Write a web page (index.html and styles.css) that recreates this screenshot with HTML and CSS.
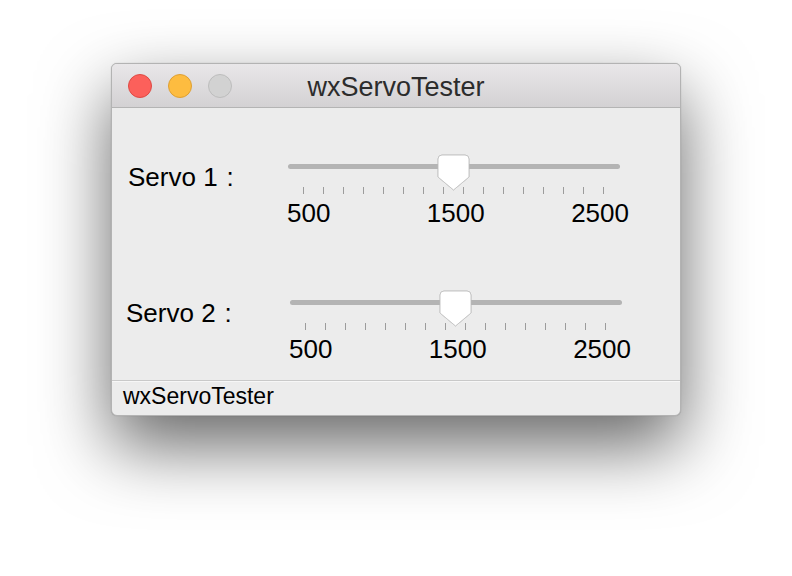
FILE: index.html
```html
<!DOCTYPE html>
<html>
<head>
<meta charset="utf-8">
<link rel="stylesheet" href="styles.css">
</head>
<body>
<div class="window">
  <div class="titlebar">
    <div class="lights">
      <span class="light red"></span>
      <span class="light yellow"></span>
      <span class="light gray"></span>
    </div>
    <div class="title">wxServoTester</div>
  </div>
  <div class="content">
    <div class="row row1">
      <div class="label">Servo 1<span class="colon">:</span></div>
      <div class="slider">
        <div class="track-wrap">
          <div class="track"></div>
          <svg class="thumb" width="33" height="37" viewBox="0 0 33 37"><path d="M5 1 H28 Q32 1 32 5 V23 L16.5 36 L1 23 V5 Q1 1 5 1 Z" fill="#ffffff" stroke="#c6c6c6" stroke-width="1"/></svg>
        </div>
        <div class="ticks">
          <i></i><i></i><i></i><i></i><i></i><i></i><i></i><i></i><i></i><i></i><i></i><i></i><i></i><i></i><i></i><i></i>
        </div>
        <div class="nums"><span>500</span><span class="mid">1500</span><span>2500</span></div>
      </div>
    </div>
    <div class="row row2">
      <div class="label">Servo 2<span class="colon">:</span></div>
      <div class="slider">
        <div class="track-wrap">
          <div class="track"></div>
          <svg class="thumb" width="33" height="37" viewBox="0 0 33 37"><path d="M5 1 H28 Q32 1 32 5 V23 L16.5 36 L1 23 V5 Q1 1 5 1 Z" fill="#ffffff" stroke="#c6c6c6" stroke-width="1"/></svg>
        </div>
        <div class="ticks">
          <i></i><i></i><i></i><i></i><i></i><i></i><i></i><i></i><i></i><i></i><i></i><i></i><i></i><i></i><i></i><i></i>
        </div>
        <div class="nums"><span>500</span><span class="mid">1500</span><span>2500</span></div>
      </div>
    </div>
  </div>
  <div class="statusbar">wxServoTester</div>
</div>
</body>
</html>
```

FILE: styles.css
```css
html, body {
  margin: 0;
  padding: 0;
  background: #ffffff;
}
body {
  width: 792px;
  height: 576px;
  overflow: hidden;
  padding-top: 63px;
  padding-left: 111px;
  box-sizing: border-box;
  font-family: "Liberation Sans", Arial, sans-serif;
  color: #000;
}
.window {
  width: 570px;
  height: 353px;
  box-sizing: border-box;
  border: 1px solid #b3b3b3;
  border-radius: 6px;
  background: #ececec;
  box-shadow: 0 30px 70px rgba(0, 0, 0, 0.6), 0 0 1px rgba(0,0,0,0.3);
  display: flex;
  flex-direction: column;
  overflow: hidden;
}
.titlebar {
  height: 43px;
  flex: none;
  background: linear-gradient(#e9e7e9, #d3d1d3);
  border-bottom: 1px solid #b4b4b4;
  display: flex;
  align-items: center;
  position: relative;
}
.lights {
  display: flex;
  gap: 16px;
  padding-left: 16px;
}
.light {
  width: 24px;
  height: 24px;
  border-radius: 50%;
  box-sizing: border-box;
}
.red { background: #fc605b; border: 1px solid #de4a44; }
.yellow { background: #fdbc40; border: 1px solid #dea033; }
.gray { background: #d2d2d2; border: 1px solid #bdbdbd; }
.title {
  position: absolute;
  left: 0;
  right: 0;
  text-align: center;
  font-size: 27px;
  line-height: 30px;
  color: #2c2c2c;
  top: 8px;
}
.content {
  flex: 1;
  padding-top: 47px;
  display: flex;
  flex-direction: column;
  gap: 63px;
}
.row {
  display: flex;
  align-items: flex-start;
}
.label {
  font-size: 26px;
  line-height: 30px;
  margin-top: 7px;
  width: 175px;
  box-sizing: border-box;
  flex: none;
}
.colon { padding-left: 9px; }
.row1 .label { padding-left: 16px; }
.row2 .label { padding-left: 14px; width: 177px; }
.slider {
  width: 342px;
}
.track-wrap {
  position: relative;
  height: 32px;
}
.track {
  position: absolute;
  left: 1px;
  width: 332px;
  top: 9px;
  height: 5px;
  border-radius: 3px;
  background: #b4b4b4;
}
.thumb {
  position: absolute;
  left: 150px;
  top: -1px;
  filter: drop-shadow(0 0.5px 0.5px rgba(0,0,0,0.15));
}
.ticks {
  display: flex;
  gap: 19px;
  padding-left: 16px;
  height: 7px;
}
.ticks i {
  width: 1px;
  height: 7px;
  background: #9c9c9c;
}
.nums {
  margin-top: 4px;
  display: flex;
  justify-content: space-between;
  font-size: 26px;
  line-height: 30px;
}
.nums .mid { margin-left: 10px; }
.statusbar {
  flex: none;
  height: 34px;
  border-top: 1px solid #c9c9c9;
  box-shadow: inset 0 1px 0 #f7f7f7;
  font-size: 23px;
  line-height: 30px;
  padding-left: 11px;
  box-sizing: content-box;
}
```
